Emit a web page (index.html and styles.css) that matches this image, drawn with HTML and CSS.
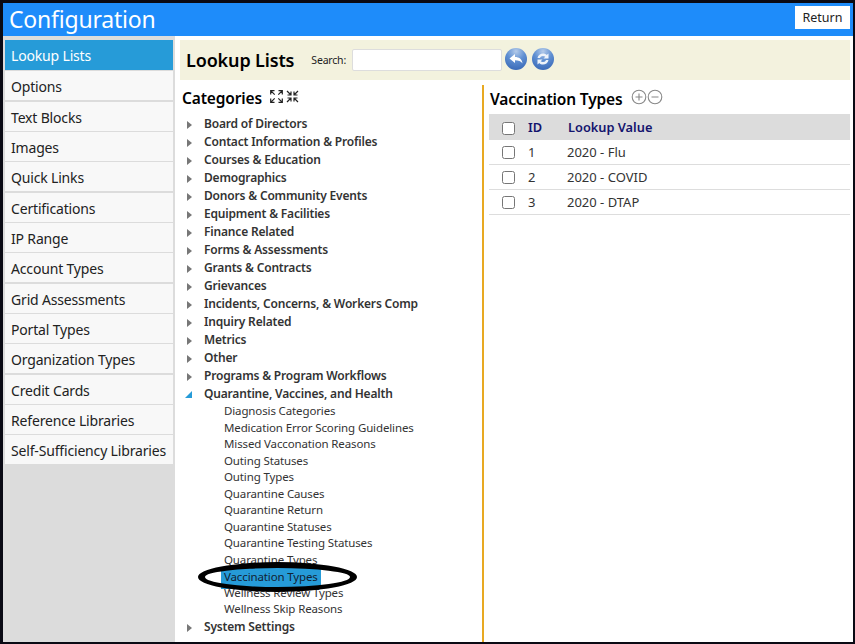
FILE: index.html
```html
<!DOCTYPE html>
<html lang="en">
<head>
  <title>Configuration</title>
  <meta charset="UTF-8">
  <link rel="stylesheet" href="styles.css">
</head>
<body>
<div class="frame">
  <div class="topbar">
    <h1>Configuration</h1>
    <button class="return-button">Return</button>
  </div>
  <div class="content">
    <ul class="sidebar">
      <li class="active">Lookup Lists</li>
      <li>Options</li>
      <li>Text Blocks</li>
      <li>Images</li>
      <li>Quick Links</li>
      <li>Certifications</li>
      <li>IP Range</li>
      <li>Account Types</li>
      <li>Grid Assessments</li>
      <li>Portal Types</li>
      <li>Organization Types</li>
      <li>Credit Cards</li>
      <li>Reference Libraries</li>
      <li>Self-Sufficiency Libraries</li>
    </ul>
    <div class="main">
      <div class="title-bar">
        <h2>Lookup Lists</h2>
        <label class="search-label">Search:</label>
        <input class="search-input" type="text">
        <span class="round-button">
          <svg width="22" height="22" viewBox="0 0 22 22"><path d="M4.500 10.500 10 6v3c4 0 7 2 7.500 6.500-1.500-2.500-4-3.200-7.500-3.200V15z" fill="#fff"/></svg>
        </span>
        <span class="round-button">
          <svg width="22" height="22" viewBox="0 0 22 22"><path d="M5.500 10c.6-3 3-4.500 5.500-4.500 1.500 0 2.800.5 3.700 1.500L16.500 5.500V10.500H11.500L13.300 8.800c-.6-.5-1.400-.8-2.300-.8-1.500 0-2.600.8-3 2zM16.500 12c-.6 3-3 4.500-5.500 4.500-1.500 0-2.800-.5-3.700-1.500L5.500 16.500V11.500H10.500L8.700 13.200c.6.5 1.400.8 2.300.8 1.500 0 2.600-.8 3-2z" fill="#eef3fa"/></svg>
        </span>
      </div>
      <div class="panels">
        <div class="categories">
          <div class="cat-heading">
            <h3>Categories</h3>
            <svg class="cat-icon" width="13" height="13" viewBox="0 0 13 13"><path d="M.7 4.500V.7h3.800M.7.7l4 4M8.500.7h3.800v3.800M12.300.7l-4 4M.7 8.500v3.800h3.800M.7 12.300l4-4M8.500 12.300h3.800V8.500M12.300 12.300l-4-4" fill="none" stroke="#222" stroke-width="1.200"/></svg>
            <svg class="cat-icon" width="13" height="13" viewBox="0 0 13 13"><path d="M1.500 5h3.500V1.500M5 5 1 1M8 1.500V5h3.500M8 5l4-4M1.500 8H5v3.500M5 8l-4 4M8 11.500V8h3.500M8 8l4 4" fill="none" stroke="#222" stroke-width="1.200"/></svg>
          </div>
          <ul class="tree">
            <li><i class="arrow"></i>Board of Directors</li>
            <li><i class="arrow"></i>Contact Information &amp; Profiles</li>
            <li><i class="arrow"></i>Courses &amp; Education</li>
            <li><i class="arrow"></i>Demographics</li>
            <li><i class="arrow"></i>Donors &amp; Community Events</li>
            <li><i class="arrow"></i>Equipment &amp; Facilities</li>
            <li><i class="arrow"></i>Finance Related</li>
            <li><i class="arrow"></i>Forms &amp; Assessments</li>
            <li><i class="arrow"></i>Grants &amp; Contracts</li>
            <li><i class="arrow"></i>Grievances</li>
            <li><i class="arrow"></i>Incidents, Concerns, &amp; Workers Comp</li>
            <li><i class="arrow"></i>Inquiry Related</li>
            <li><i class="arrow"></i>Metrics</li>
            <li><i class="arrow"></i>Other</li>
            <li><i class="arrow"></i>Programs &amp; Program Workflows</li>
            <li><i class="arrow open"></i>Quarantine, Vaccines, and Health</li>
            <ul class="subtree">
              <li>Diagnosis Categories</li>
              <li>Medication Error Scoring Guidelines</li>
              <li>Missed Vacconation Reasons</li>
              <li>Outing Statuses</li>
              <li>Outing Types</li>
              <li>Quarantine Causes</li>
              <li>Quarantine Return</li>
              <li>Quarantine Statuses</li>
              <li>Quarantine Testing Statuses</li>
              <li>Quarantine Types</li>
              <li><span class="selected">Vaccination Types</span></li>
              <li>Wellness Review Types</li>
              <li>Wellness Skip Reasons</li>
            </ul>
            <li><i class="arrow"></i>System Settings</li>
          </ul>
        </div>
        <div class="values">
          <div class="val-heading">
            <h3>Vaccination Types</h3>
            <svg width="32" height="16" viewBox="0 0 32 16"><g fill="none" stroke="#888" stroke-width="1.100"><circle cx="8" cy="8" r="6.800"/><circle cx="24" cy="8" r="6.800"/><path d="M8 4.500v7M4.500 8h7M20.500 8h7"/></g></svg>
          </div>
          <div class="grid-head row">
            <span class="check-cell"><input type="checkbox"></span>
            <span class="id-cell">ID</span>
            <span>Lookup Value</span>
          </div>
          <div class="row">
            <span class="check-cell"><input type="checkbox"></span>
            <span class="id-cell">1</span>
            <span>2020 - Flu</span>
          </div>
          <div class="row">
            <span class="check-cell"><input type="checkbox"></span>
            <span class="id-cell">2</span>
            <span>2020 - COVID</span>
          </div>
          <div class="row">
            <span class="check-cell"><input type="checkbox"></span>
            <span class="id-cell">3</span>
            <span>2020 - DTAP</span>
          </div>
        </div>
      </div>
    </div>
  </div>
  <div class="ellipse"></div>
</div>
</body>
</html>
```
FILE: styles.css
```css
* {
  box-sizing: border-box;
}
html, body {
  margin: 0;
  padding: 0;
  height: 100%;
  overflow: hidden;
  background: #fff;
}
body {
  font-family: "Noto Sans", sans-serif;
  color: #222;
}
ul {
  list-style: none;
  margin: 0;
  padding: 0;
}
.frame {
  position: relative;
  width: 855px;
  height: 644px;
  border-style: solid;
  border-color: #0a0a14;
  border-width: 3px 2px 2px 3px;
  display: flex;
  flex-direction: column;
  overflow: hidden;
}
.topbar {
  height: 33px;
  background: #1e8cfa;
  display: flex;
  align-items: center;
  justify-content: space-between;
  padding: 0 3px 0 6px;
  flex: none;
}
.topbar h1 {
  margin: 0;
  font-size: 23px;
  font-weight: 400;
  color: #fff;
  line-height: 35px;
  letter-spacing: -.2px;
}
.return-button {
  width: 55px;
  height: 23px;
  margin-top: -4px;
  border: none;
  background: #fff;
  font: 12.500px "Noto Sans", sans-serif;
  color: #222;
  padding: 0;
}
.content {
  flex: 1;
  display: flex;
  min-height: 0;
}
.sidebar {
  width: 172px;
  flex: none;
  background: #dcdcdc;
  padding: 4px 2px 0 2px;
}
.sidebar li {
  height: 29px;
  margin-bottom: 1.330px;
  padding-left: 6px;
  background: #f8f8f8;
  font-size: 14px;
  line-height: 32.600px;
  letter-spacing: -.17px;
  white-space: nowrap;
}
.sidebar li.active {
  height: 30px;
  background: #269bd8;
  color: #fff;
}
.main {
  flex: 1;
  padding: 4px 3px 0 5px;
  display: flex;
  flex-direction: column;
  min-width: 0;
}
.title-bar {
  height: 40px;
  background: #f3f2de;
  display: flex;
  align-items: center;
  padding-left: 6px;
  flex: none;
}
.title-bar h2 {
  margin: 0 17px 0 0;
  font-size: 18px;
  font-weight: 600;
  color: #000;
  letter-spacing: -.14px;
}
.search-label {
  font-size: 10.500px;
  margin-right: 6px;
  letter-spacing: -.2px;
}
.search-input {
  width: 150px;
  height: 22px;
  border: 1px solid #ddd;
  border-radius: 2px;
  background: #fff;
  margin-right: 3px;
}
.round-button {
  width: 22px;
  height: 22px;
  border-radius: 50%;
  background: radial-gradient(circle at 50% 15%, #b4cbea 0%, #5f8fd2 42%, #2f5fb0 100%);
  margin: -2px 5px 0 0;
  display: block;
}
.round-button svg {
  display: block;
}
.panels {
  flex: 1;
  display: flex;
  min-height: 0;
  padding-top: 5px;
}
.categories {
  width: 304px;
  flex: none;
  border-right: 2px solid #e8a922;
  padding-left: 2px;
}
.cat-heading {
  display: flex;
  align-items: center;
  height: 26px;
  gap: 3px;
}
.cat-heading h3, .val-heading h3 {
  margin: 0;
  font-size: 15.500px;
  font-weight: 600;
  color: #000;
  letter-spacing: -.15px;
}
.cat-heading h3 {
  margin-right: 5px;
}
.cat-icon {
  display: block;
  margin-top: -3px;
}
.tree {
  padding-top: 4px;
}
.tree > li {
  height: 18px;
  line-height: 18px;
  font-size: 12px;
  font-weight: 600;
  color: #333;
  padding-left: 22px;
  position: relative;
  letter-spacing: -.18px;
  white-space: nowrap;
}
.arrow {
  position: absolute;
  left: 5px;
  top: 6px;
  width: 0;
  height: 0;
  border-style: solid;
  border-width: 4px 0 4px 5px;
  border-color: transparent transparent transparent #777;
}
.arrow.open {
  left: 3px;
  top: 6px;
  border-width: 0 0 7px 7px;
  border-color: transparent transparent #269bd8 transparent;
}
.subtree {
  padding-left: 42px;
}
.subtree li {
  height: 16.500px;
  line-height: 16.500px;
  font-size: 11.500px;
  font-weight: 400;
  color: #333;
  letter-spacing: -.13px;
  white-space: nowrap;
}
.selected {
  display: inline-block;
  background: #269bd8;
  height: 21px;
  line-height: 18px;
  margin-left: -3px;
  padding: 0 3px;
  width: 100px;
  color: #123;
}
.values {
  flex: 1;
  padding-left: 5px;
  min-width: 0;
}
.val-heading {
  display: flex;
  align-items: center;
  height: 29px;
  padding: 0 0 2px 1px;
  gap: 9px;
}
.val-heading svg {
  display: block;
  margin-top: -4px;
}
.row {
  display: flex;
  align-items: center;
  height: 25px;
  font-size: 13px;
  color: #333;
  border-bottom: 1px solid #ddd;
}
.grid-head {
  background: #dcdcdc;
  font-weight: 600;
  color: #14146e;
  font-size: 12.800px;
  height: 26px;
  border-bottom: none;
}
.grid-head .check-cell input {
  margin-top: 2px;
}
.grid-head .id-cell {
  width: 40px;
}
.check-cell {
  width: 39px;
  padding-left: 13px;
  display: flex;
}
.check-cell input {
  margin: 0;
  width: 13px;
  height: 13px;
}
.id-cell {
  width: 39px;
}
.ellipse {
  position: absolute;
  left: 195px;
  top: 559px;
  width: 159px;
  height: 30px;
  border-style: solid;
  border-color: #000;
  border-width: 6px 7px 5px;
  border-radius: 50%;
}
```
